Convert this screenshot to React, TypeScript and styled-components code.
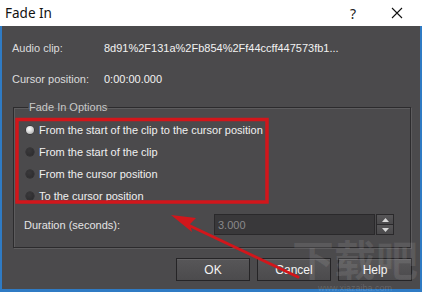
import styled, { createGlobalStyle } from 'styled-components';

const GlobalStyle = createGlobalStyle`
  html, body {
    margin: 0;
    padding: 0;
    background: #ffffff;
  }
  * {
    box-sizing: border-box;
  }
`;

const Window = styled.div`
  position: relative;
  width: 422px;
  height: 292px;
  display: flex;
  flex-direction: column;
  overflow: hidden;
`;

const TitleBar = styled.div`
  height: 26px;
  flex: 0 0 26px;
  background: #ffffff;
  display: flex;
  align-items: center;
  padding: 0 3px 0 5px;
  font-family: 'Noto Sans', 'Noto Sans CJK SC', sans-serif;
  font-size: 13.5px;
  color: #111111;
`;

const Title = styled.span`
  flex: 1;
`;

const TitleButton = styled.span`
  width: 44px;
  display: flex;
  justify-content: center;
  align-items: center;
  font-size: 14px;
  color: #222;
`;

const Body = styled.div`
  flex: 1;
  background: #4b4a4c;
  border-left: 2px solid #2f7bc4;
  border-right: 2px solid #2f7bc4;
  border-bottom: 3px solid #2f7bc4;
  display: flex;
  flex-direction: column;
  padding: 12px 8px 0 10px;
  color: #e4e4e4;
  font-family: 'Liberation Sans', Arial, sans-serif;
  font-size: 11px;
`;

const InfoRow = styled.div<{ $gap?: number }>`
  display: flex;
  align-items: center;
  height: 20px;
  margin-top: ${({ $gap }) => $gap ?? 0}px;
`;

const InfoLabel = styled.span`
  width: 92px;
  color: #dcdcdc;
`;

const InfoValue = styled.span`
  color: #f2f2f2;
`;

const Group = styled.fieldset`
  margin: 10px 1px 0 1px;
  padding: 4px 15px 12px 10px;
  border: 1px solid #2c2b2d;
  box-shadow: inset 1px 1px 0 #5d5c5e, 1px 1px 0 #5d5c5e;
  min-width: 0;
`;

const Legend = styled.legend`
  margin-left: 4px;
  padding: 0 1px;
  line-height: 16px;
  color: #c8c8c8;
`;

const RadioList = styled.div`
  display: flex;
  flex-direction: column;
  padding-left: 2px;
`;

const RadioRow = styled.div`
  display: flex;
  align-items: center;
  height: 22px;
  gap: 5px;
  color: #f0f0f0;
`;

const RadioDot = styled.span<{ $checked?: boolean }>`
  width: 8px;
  height: 8px;
  border-radius: 50%;
  background: ${({ $checked }) =>
    $checked
      ? 'radial-gradient(circle at 40% 35%, #ffffff 0%, #d8d8d8 45%, #9a9a9a 100%)'
      : 'radial-gradient(circle at 40% 35%, #3a393b 0%, #2a292b 100%)'};
  box-shadow: 0 0 0 0.5px #2a292b;
`;

const DurationRow = styled.div`
  display: flex;
  align-items: center;
  height: 21px;
  margin-top: 7px;
`;

const DurationLabel = styled.span`
  width: 190px;
  color: #e4e4e4;
`;

const SpinInput = styled.div`
  display: flex;
  height: 21px;
`;

const InputField = styled.div`
  width: 161px;
  height: 21px;
  background: #39383a;
  border: 1px solid #2a292b;
  color: #8a898b;
  display: flex;
  align-items: center;
  padding-left: 3px;
`;

const SpinButtons = styled.div`
  width: 18px;
  display: flex;
  flex-direction: column;
  margin-left: 1px;
  border: 1px solid #2a292b;
`;

const SpinButton = styled.div`
  flex: 1;
  background: linear-gradient(#565557, #4a494b);
  display: flex;
  align-items: center;
  justify-content: center;
  & + & {
    border-top: 1px solid #2a292b;
  }
`;

const ButtonRow = styled.div`
  display: flex;
  justify-content: flex-end;
  gap: 7px;
  margin-top: 10px;
`;

const Button = styled.div`
  width: 74px;
  height: 23px;
  border: 1px solid #252426;
  background: linear-gradient(#575658, #4c4b4d);
  box-shadow: inset 0 1px 0 #636264;
  color: #f4f4f4;
  display: flex;
  align-items: center;
  justify-content: center;
  font-size: 12px;
`;

const Overlay = styled.svg`
  position: absolute;
  left: 0;
  top: 0;
  pointer-events: none;
`;

const Watermark = styled.div`
  position: absolute;
  left: 292px;
  top: 232px;
  display: flex;
  flex-direction: column;
  align-items: center;
  pointer-events: none;
  color: rgba(255, 255, 255, 0.09);
`;

const WatermarkBig = styled.span`
  font-family: 'Noto Sans CJK SC', sans-serif;
  font-weight: 700;
  font-size: 42px;
  line-height: 52px;
`;

const WatermarkSmall = styled.span`
  font-family: 'Liberation Sans', sans-serif;
  font-size: 9px;
  line-height: 8px;
  color: rgba(255, 255, 255, 0.16);
`;

function Triangle({ up }: { up?: boolean }) {
  return (
    <svg width="7" height="4" viewBox="0 0 7 4">
      <polygon points={up ? '0,4 7,4 3.5,0' : '0,0 7,0 3.5,4'} fill="#d8d8d8" />
    </svg>
  );
}

const options = [
  'From the start of the clip to the cursor position',
  'From the start of the clip',
  'From the cursor position',
  'To the cursor position',
];

export default function App() {
  return (
    <Window>
      <GlobalStyle />
      <TitleBar>
        <Title>Fade In</Title>
        <TitleButton>?</TitleButton>
        <TitleButton>
          <svg width="12" height="12" viewBox="0 0 12 12">
            <path d="M1 1 L11 11 M11 1 L1 11" stroke="#111" strokeWidth="1.1" />
          </svg>
        </TitleButton>
      </TitleBar>
      <Body>
        <InfoRow>
          <InfoLabel>Audio clip:</InfoLabel>
          <InfoValue>8d91%2F131a%2Fb854%2Ff44ccff447573fb1...</InfoValue>
        </InfoRow>
        <InfoRow $gap={11}>
          <InfoLabel>Cursor position:</InfoLabel>
          <InfoValue>0:00:00.000</InfoValue>
        </InfoRow>
        <Group>
          <Legend>Fade In Options</Legend>
          <RadioList>
            {options.map((o, i) => (
              <RadioRow key={o}>
                <RadioDot $checked={i === 0} />
                <span>{o}</span>
              </RadioRow>
            ))}
          </RadioList>
          <DurationRow>
            <DurationLabel>Duration (seconds):</DurationLabel>
            <SpinInput>
              <InputField>3.000</InputField>
              <SpinButtons>
                <SpinButton>
                  <Triangle up />
                </SpinButton>
                <SpinButton>
                  <Triangle />
                </SpinButton>
              </SpinButtons>
            </SpinInput>
          </DurationRow>
        </Group>
        <ButtonRow>
          <Button>OK</Button>
          <Button>Cancel</Button>
          <Button>Help</Button>
        </ButtonRow>
      </Body>
      <Watermark>
        <WatermarkBig>下载吧</WatermarkBig>
        <WatermarkSmall>www.xiazaiba.com</WatermarkSmall>
      </Watermark>
      <Overlay width="422" height="292" viewBox="0 0 422 292">
        <rect x="17" y="119.5" width="250" height="82.5" fill="none" stroke="#d2161b" strokeWidth="3.5" />
        <line x1="298" y1="277" x2="186" y2="224" stroke="#d2161b" strokeWidth="3" strokeLinecap="round" />
        <polygon points="171,215 196,218 190,224 192,232" fill="#d2161b" />
      </Overlay>
    </Window>
  );
}
